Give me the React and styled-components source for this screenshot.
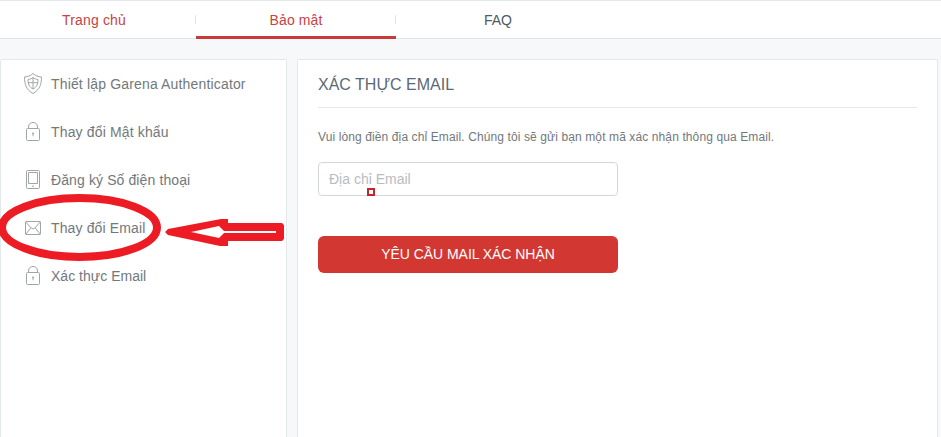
import React from "react";
import styled, { createGlobalStyle } from "styled-components";

const GlobalStyle = createGlobalStyle`
  *, *::before, *::after { box-sizing: border-box; }
  body {
    margin: 0;
    background: #f7f8fa;
    font-family: "Liberation Sans", Arial, sans-serif;
    color: #72787c;
  }
`;

const Page = styled.div`
  position: relative;
  display: flex;
  flex-direction: column;
  width: 941px;
  height: 437px;
  overflow: hidden;
`;

const Nav = styled.nav`
  display: flex;
  flex: none;
  height: 39px;
  background: #fff;
  border-top: 1px solid #e4e9ec;
  box-shadow: inset 0 -1px #e1e6e8;
`;

const Tab = styled.a`
  display: flex;
  align-items: center;
  justify-content: center;
  width: ${(p) => p.$width || 200}px;
  padding: ${(p) => p.$pad || "3px 0 0"};
  font-size: 14px;
  letter-spacing: ${(p) => p.$spacing || 0}px;
  color: ${(p) => (p.$red ? "#c64442" : "#4b5a65")};
  border-bottom: 3px solid ${(p) => (p.$active ? "#ca393b" : "transparent")};
`;

const Separator = styled.span`
  width: 1px;
  height: 9px;
  margin: 14px 0 0 -1px;
  background: #e2e6e8;
`;

const Columns = styled.div`
  display: flex;
  flex: 1;
  gap: 10px;
  padding: 20px 3px 0 0;
`;

const Card = styled.section`
  background: #fff;
  border: 1px solid #e3e8ea;
  border-bottom: 0;
  border-radius: 2px 2px 0 0;
`;

const Sidebar = styled(Card)`
  width: 287px;
  padding: 0 0 0 22px;
`;

const MenuItem = styled.a`
  display: flex;
  align-items: center;
  height: 48px;
  gap: 8px;
  font-size: 14px;
  letter-spacing: ${(p) => p.$spacing || 0}px;
`;

const IconSvg = styled.svg`
  flex: none;
  width: 20px;
  height: 24px;
  fill: none;
  stroke: #a0a5a8;
  stroke-width: 1;
`;

const Content = styled(Card)`
  display: flex;
  flex-direction: column;
  align-items: flex-start;
  flex: 1;
  padding: 0 20px;
`;

const Title = styled.h1`
  align-self: stretch;
  height: 48px;
  margin: 0;
  padding-top: 1px;
  font-size: 16px;
  font-weight: 400;
  line-height: 48px;
  color: #5b6977;
  border-bottom: 1px solid #e3e8ea;
`;

const Hint = styled.p`
  margin: 21px 0 0;
  font-size: 12px;
  line-height: 16px;
  letter-spacing: 0.11px;
  white-space: nowrap;
`;

const EmailInput = styled.input`
  width: 300px;
  height: 34px;
  margin-top: 17px;
  padding: 0 10px;
  border: 1px solid #d5d8da;
  border-radius: 4px;
  outline: 0;
  background: #fff;
  font: 14px "Liberation Sans", Arial, sans-serif;
  &::placeholder { color: #b9bcbf; opacity: 1; }
`;

const Submit = styled.button`
  width: 300px;
  height: 37px;
  margin-top: 40px;
  padding: 0 0 2px;
  border: 0;
  border-radius: 6px;
  background: #d33731;
  color: #fff;
  font: 14px "Liberation Sans", Arial, sans-serif;
  letter-spacing: -0.05px;
`;

const Annotations = styled.svg`
  position: absolute;
  inset: 0;
  width: 941px;
  height: 437px;
  pointer-events: none;
`;

const ShieldIcon = () => (
  <IconSvg viewBox="0 0 20 24">
    <path d="M10 1.5C7.5 3.8 4.8 4.7 1.5 5C1.5 12.5 3.5 18 10 21.5C16.5 18 18.5 12.5 18.5 5C15.2 4.7 12.5 3.8 10 1.5Z" />
    <path d="M10 5.5C8.5 6.7 7 7.2 5 7.5C5 12 6.2 15 10 17C13.8 15 15 12 15 7.5C13 7.2 11.5 6.7 10 5.5ZM10 5.5V17M5 10.7H15" />
  </IconSvg>
);

const LockIcon = () => (
  <IconSvg viewBox="0 0 20 24">
    <rect x="3.5" y="8.5" width="13" height="12" rx="1" />
    <path d="M5.5 8.5V7C5.5 .9 14.5 .9 14.5 7V8.5" />
    <path d="M10 12.5V16.3M9 13.4H11" />
  </IconSvg>
);

const PhoneIcon = () => (
  <IconSvg viewBox="0 0 20 24">
    <rect x="3.5" y="2.5" width="13" height="18" rx="1.2" />
    <path d="M5.5 4.5H14.5V15.5H5.5ZM9 18.2H11" />
  </IconSvg>
);

const MailIcon = () => (
  <IconSvg viewBox="0 0 20 24">
    <rect x="2.5" y="5.5" width="15" height="13" rx=".6" />
    <path d="M2.8 6L8.5 12.3Q10 13.6 11.5 12.3L17.2 6M3 18L7.8 11.8M17 18L12.2 11.8" />
  </IconSvg>
);

const menu = [
  { label: "Thiết lập Garena Authenticator", Icon: ShieldIcon, spacing: 0.16 },
  { label: "Thay đổi Mật khẩu", Icon: LockIcon, spacing: 0.15 },
  { label: "Đăng ký Số điện thoại", Icon: PhoneIcon, spacing: 0.11 },
  { label: "Thay đổi Email", Icon: MailIcon, spacing: 0.13 },
  { label: "Xác thực Email", Icon: LockIcon, spacing: 0.02 },
];

export default function App() {
  return (
    <>
      <GlobalStyle />
      <Page>
        <Nav>
          <Tab $red $width={196} $pad="3px 8px 0 0" $spacing={0.15}>Trang chủ</Tab>
          <Separator />
          <Tab $red $active $spacing={0.1}>Bảo mật</Tab>
          <Separator />
          <Tab $width={204}>FAQ</Tab>
        </Nav>
        <Columns>
          <Sidebar>
            {menu.map(({ label, Icon, spacing }) => (
              <MenuItem key={label} $spacing={spacing}><Icon />{label}</MenuItem>
            ))}
          </Sidebar>
          <Content>
            <Title>XÁC THỰC EMAIL</Title>
            <Hint>Vui lòng điền địa chỉ Email. Chúng tôi sẽ gửi bạn một mã xác nhận thông qua Email.</Hint>
            <EmailInput placeholder="Địa chỉ Email" />
            <Submit>YÊU CẦU MAIL XÁC NHẬN</Submit>
          </Content>
        </Columns>
        <Annotations viewBox="0 0 941 437" fill="none" stroke="#ed1c24">
          <ellipse cx="79.5" cy="227.5" rx="77.5" ry="29.5" strokeWidth="8" />
          <path
            fill="#ed1c24" stroke="none" fillRule="evenodd"
            d="M165 232L168 229L221 219H228V223H282L284 225V239L282 241H228V246H220L168 235ZM191 232L219 238L224 233H276V231H224L219 226Z"
          />
          <rect x="368" y="189" width="6" height="6" stroke="#c4262d" strokeWidth="2" />
        </Annotations>
      </Page>
    </>
  );
}
